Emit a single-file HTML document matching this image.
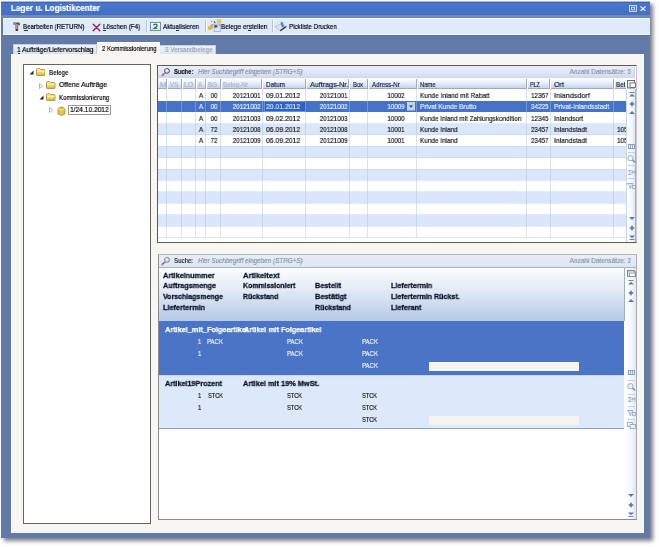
<!DOCTYPE html>
<html><head><meta charset="utf-8"><style>
html,body{margin:0;padding:0;width:659px;height:547px;overflow:hidden;background:#fff;}
body{position:relative;font-family:"Liberation Sans",sans-serif;filter:blur(0.3px);}
.a{position:absolute;}
.t{position:absolute;line-height:1;white-space:pre;-webkit-text-stroke:0.2px currentColor;will-change:transform;}
</style></head><body>
<div class="a" style="left:1.00px;top:1.00px;width:649.00px;height:537.00px;background:#617aa7;box-shadow:3px 3px 4px rgba(40,40,60,0.6);"></div>
<div class="a" style="left:1.00px;top:1.00px;width:649.00px;height:14.40px;background:linear-gradient(#a9b9da 0,#a9b9da 0.6px,#3d63b6 0.6px,#3d63b6 1.4px,#4a76cb 2.2px,#4672c8 8px,#4470c6 13.4px,#3b62b4 14.4px);"></div>
<div class="a" style="left:1.00px;top:15.40px;width:649.00px;height:2.40px;background:#7088ba;"></div>
<div class="t" style="left:10.70px;top:4.05px;font-size:8.8px;font-weight:bold;color:#fff;-webkit-text-stroke:0.2px #fff;transform:scaleX(0.9192);transform-origin:left 0;">Lager u. Logistikcenter</div>
<svg class="a" style="left:628.5px;top:4.8px" width="8" height="7" viewBox="0 0 8 7"><rect x="0.5" y="0.5" width="7" height="6" fill="none" stroke="#d8e2f6" stroke-width="0.9"/><rect x="2.4" y="2.2" width="3.2" height="2.6" fill="none" stroke="#d8e2f6" stroke-width="0.9"/></svg>
<svg class="a" style="left:640.3px;top:5.8px" width="6" height="5.5" viewBox="0 0 6 5.5"><path d="M0.5 0.5L5.5 5M5.5 0.5L0.5 5" stroke="#eef3fc" stroke-width="1.1"/></svg>
<div class="a" style="left:2.60px;top:17.80px;width:647.40px;height:17.20px;background:linear-gradient(#effaff 0,#effaff 0.9px,#dfecfc 1.5px,#dbe9fb 15.2px,#f4f9ff 16.2px,#eef6ff 17.2px);"></div>
<div class="a" style="left:1.00px;top:35.00px;width:649.00px;height:1.00px;background:#5d74a2;"></div>
<div class="t" style="left:23.20px;top:22.90px;font-size:7.8px;color:#000;transform:scaleX(0.7926);transform-origin:left 0;">Bearbeiten (RETURN)</div>
<div class="t" style="left:102.80px;top:22.90px;font-size:7.8px;color:#000;transform:scaleX(0.8095);transform-origin:left 0;">Löschen (F4)</div>
<div class="t" style="left:162.70px;top:22.90px;font-size:7.8px;color:#000;transform:scaleX(0.8062);transform-origin:left 0;">Aktualisieren</div>
<div class="t" style="left:220.70px;top:22.90px;font-size:7.8px;color:#000;transform:scaleX(0.8277);transform-origin:left 0;">Belege erstellen</div>
<div class="t" style="left:288.60px;top:22.90px;font-size:7.8px;color:#000;transform:scaleX(0.7991);transform-origin:left 0;">Pickliste Drucken</div>
<div class="a" style="left:145.60px;top:19.50px;width:1.00px;height:12.50px;background:#b6c4d8;"></div>
<div class="a" style="left:146.60px;top:19.50px;width:1.00px;height:12.50px;background:#ffffff;"></div>
<div class="a" style="left:204.50px;top:19.50px;width:1.00px;height:12.50px;background:#b6c4d8;"></div>
<div class="a" style="left:205.50px;top:19.50px;width:1.00px;height:12.50px;background:#ffffff;"></div>
<div class="a" style="left:272.20px;top:19.50px;width:1.00px;height:12.50px;background:#b6c4d8;"></div>
<div class="a" style="left:273.20px;top:19.50px;width:1.00px;height:12.50px;background:#ffffff;"></div>
<div class="a" style="left:12.60px;top:43.80px;width:84.20px;height:10.60px;background:linear-gradient(#eef3fb,#d6e2f3);border:1px solid #c2cee0;border-bottom:none;box-sizing:border-box;"></div>
<div class="t" style="left:17.40px;top:45.90px;font-size:7.8px;color:#000;transform:scaleX(0.8431);transform-origin:left 0;">1 Aufträge/Liefervorschlag</div>
<div class="a" style="left:97.40px;top:42.20px;width:62.70px;height:12.80px;background:#f7f6f1;border-top:1px solid #ffffff;box-sizing:border-box;"></div>
<div class="t" style="left:101.70px;top:44.90px;font-size:7.8px;color:#000;transform:scaleX(0.7727);transform-origin:left 0;">2 Kommissionierung</div>
<div class="a" style="left:160.10px;top:44.80px;width:56.30px;height:9.40px;background:linear-gradient(#eef3fb,#d9e4f4);border:1px solid #c4d0e2;border-left:none;border-bottom:none;box-sizing:border-box;"></div>
<div class="t" style="left:165.40px;top:45.90px;font-size:7.8px;color:#9aa3b4;transform:scaleX(0.8164);transform-origin:left 0;">3 Versandbelege</div>
<div class="a" style="left:10.70px;top:54.00px;width:633.30px;height:478.60px;background:#f7f6f1;border-left:1px solid #ffffff;border-bottom:1px solid #eef4fc;box-sizing:border-box;"></div>
<div class="a" style="left:23.20px;top:64.00px;width:127.80px;height:459.60px;background:#fff;border:1px solid #656565;box-sizing:border-box;"></div>
<svg class="a" style="left:12.5px;top:21.5px" width="8" height="10" viewBox="0 0 8 10"><path d="M0.4 0.6 L5.6 0.4 Q7 0.6 7 2 L7 3.2 L5.6 3.2 L5 2.4 L0.4 2.4Z" fill="#4e5660"/><path d="M0.4 0.6 L3 0.5 L3 2.4 L0.4 2.4Z" fill="#8a9098"/><path d="M2.2 2.6 L5.2 2.6 L5.2 8.2 Q3.7 10 2.2 8.2Z" fill="#b0704a"/><rect x="2.8" y="3" width="0.8" height="5" fill="#e8b090"/><circle cx="3.7" cy="8" r="0.9" fill="#3a1410"/></svg>
<div class="a" style="left:23.50px;top:30.30px;width:4.00px;height:0.60px;background:#333;"></div>
<div class="a" style="left:103.20px;top:30.30px;width:3.30px;height:0.60px;background:#333;"></div>
<div class="a" style="left:17.60px;top:53.10px;width:2.60px;height:0.60px;background:#333;"></div>
<div class="a" style="left:175.60px;top:30.30px;width:3.00px;height:0.60px;background:#333;"></div>
<div class="a" style="left:248.00px;top:30.30px;width:2.80px;height:0.60px;background:#333;"></div>
<svg class="a" style="left:91.5px;top:22.5px" width="9" height="9" viewBox="0 0 9 9"><path d="M1.2 1.2 L7.8 7.8 M7.8 1.2 L1.2 7.8" stroke="#a8183a" stroke-width="1.35" stroke-linecap="round"/></svg>
<svg class="a" style="left:150px;top:22px" width="11" height="9" viewBox="0 0 11 9"><defs><linearGradient id="rg" x1="0" y1="0" x2="0" y2="1"><stop offset="0" stop-color="#f6fbff"/><stop offset="1" stop-color="#d4e6f8"/></linearGradient></defs><rect x="0.5" y="0.5" width="10" height="8" fill="url(#rg)" stroke="#6c84a6" stroke-width="0.9"/><path d="M3.6 3.1 Q5.2 1.6 6.9 2.6 Q7.6 3.6 6.2 4.7 L4.2 6.3 L7.3 6.3" fill="none" stroke="#1c8c2c" stroke-width="1.3"/><path d="M3.2 2.2 L4.6 2.6 L3.6 3.8Z" fill="#1c8c2c"/></svg>
<svg class="a" style="left:207px;top:19px" width="15" height="14" viewBox="0 0 15 14"><rect x="7.2" y="5.1" width="6.3" height="7.5" fill="#d6e6fb" stroke="#93a6c8" stroke-width="0.7"/><path d="M0.8 9.2 Q1.2 6.8 3.6 6.2 Q5.4 4.2 6.6 5.2 Q6.9 7.6 5.6 9.4 Q3.8 11.6 1.6 10.8Z" fill="#e3b23c"/><path d="M0.8 9.6 Q2 8.2 3.4 9 Q2.6 10.8 1.4 10.6Z" fill="#c8c860"/><path d="M3.8 6.4 Q5.4 4.6 6.4 5.6 Q5.4 7.2 4.4 7.4Z" fill="#f0a030"/><path d="M7.4 6.2 Q9 5.3 11 7.2 Q9.6 9.2 7.6 8.8Z" fill="#2452b8"/><circle cx="12" cy="2.3" r="1.9" fill="#f4d050" stroke="#d89a30" stroke-width="0.6"/><circle cx="4.6" cy="2.6" r="0.7" fill="#5a80d0"/><circle cx="7.6" cy="3.2" r="0.9" fill="#3060c0"/><circle cx="12.2" cy="6.2" r="0.5" fill="#3060c0"/></svg>
<svg class="a" style="left:275px;top:19.5px" width="13" height="12" viewBox="0 0 13 12"><path d="M0.3 6.6 L5 4 L11.8 6.8 L5.5 11.3Z" fill="#e6dfe3" stroke="#9a9aa2" stroke-width="0.5"/><path d="M11.8 6.8 L5.5 11.3 L5.1 10.1 L10.6 6.2Z" fill="#1e2438"/><path d="M2.4 2.2 L5.6 0.6 L8.2 3.2 L5 4.8Z" fill="#effbff" stroke="#a8b8c8" stroke-width="0.4"/><path d="M5.1 2.6 L7.4 2 L9.3 6.4 L7 7.6Z" fill="#3d8bdb"/></svg>
<svg class="a" style="left:28.5px;top:70.3px" width="5" height="5" viewBox="0 0 5 5"><path d="M4.5 0.5 L4.5 4.5 L0.5 4.5Z" fill="#262626"/></svg>
<svg class="a" style="left:35.5px;top:68px" width="9.5" height="8" viewBox="0 0 9.5 8"><defs><linearGradient id="fg" x1="0" y1="0" x2="0" y2="1"><stop offset="0" stop-color="#fbeaa0"/><stop offset="0.6" stop-color="#efd46a"/><stop offset="1" stop-color="#d8b040"/></linearGradient></defs><path d="M0.5 1.6 Q0.5 0.5 1.5 0.5 L3.6 0.5 L4.5 1.5 L8 1.5 Q9 1.5 9 2.5 L9 6.8 Q9 7.5 8.3 7.5 L1.2 7.5 Q0.5 7.5 0.5 6.8Z" fill="url(#fg)" stroke="#a88a30" stroke-width="0.8"/><rect x="1.2" y="3" width="7.1" height="1" fill="#fff6c0" opacity="0.8"/></svg>
<div class="t" style="left:48.80px;top:68.90px;font-size:7.8px;color:#000;transform:scaleX(0.8029);transform-origin:left 0;">Belege</div>
<svg class="a" style="left:39px;top:82.7px" width="4" height="6" viewBox="0 0 4 6"><path d="M0.5 0.5 L3.5 3 L0.5 5.5Z" fill="none" stroke="#a0a0a0" stroke-width="0.8"/></svg>
<svg class="a" style="left:46px;top:80.5px" width="9.5" height="8" viewBox="0 0 9.5 8"><defs><linearGradient id="fg" x1="0" y1="0" x2="0" y2="1"><stop offset="0" stop-color="#fbeaa0"/><stop offset="0.6" stop-color="#efd46a"/><stop offset="1" stop-color="#d8b040"/></linearGradient></defs><path d="M0.5 1.6 Q0.5 0.5 1.5 0.5 L3.6 0.5 L4.5 1.5 L8 1.5 Q9 1.5 9 2.5 L9 6.8 Q9 7.5 8.3 7.5 L1.2 7.5 Q0.5 7.5 0.5 6.8Z" fill="url(#fg)" stroke="#a88a30" stroke-width="0.8"/><rect x="1.2" y="3" width="7.1" height="1" fill="#fff6c0" opacity="0.8"/></svg>
<div class="t" style="left:59.20px;top:80.90px;font-size:7.8px;color:#000;transform:scaleX(0.8826);transform-origin:left 0;">Offene Aufträge</div>
<svg class="a" style="left:38.5px;top:95.3px" width="5" height="5" viewBox="0 0 5 5"><path d="M4.5 0.5 L4.5 4.5 L0.5 4.5Z" fill="#262626"/></svg>
<svg class="a" style="left:46px;top:92.7px" width="9.5" height="8" viewBox="0 0 9.5 8"><defs><linearGradient id="fg" x1="0" y1="0" x2="0" y2="1"><stop offset="0" stop-color="#fbeaa0"/><stop offset="0.6" stop-color="#efd46a"/><stop offset="1" stop-color="#d8b040"/></linearGradient></defs><path d="M0.5 1.6 Q0.5 0.5 1.5 0.5 L3.6 0.5 L4.5 1.5 L8 1.5 Q9 1.5 9 2.5 L9 6.8 Q9 7.5 8.3 7.5 L1.2 7.5 Q0.5 7.5 0.5 6.8Z" fill="url(#fg)" stroke="#a88a30" stroke-width="0.8"/><rect x="1.2" y="3" width="7.1" height="1" fill="#fff6c0" opacity="0.8"/></svg>
<div class="t" style="left:59.20px;top:93.90px;font-size:7.8px;color:#000;transform:scaleX(0.7840);transform-origin:left 0;">Kommissionierung</div>
<svg class="a" style="left:49.3px;top:107.3px" width="4" height="6" viewBox="0 0 4 6"><path d="M0.5 0.5 L3.5 3 L0.5 5.5Z" fill="none" stroke="#a0a0a0" stroke-width="0.8"/></svg>
<svg class="a" style="left:57px;top:105.5px" width="9" height="10" viewBox="0 0 9 10"><path d="M1 2.5 L4.5 0.8 L8 2.5 L8 8 L4.5 9.4 L1 8Z" fill="#e2c44a" stroke="#9a8230" stroke-width="0.7"/><path d="M1 2.5 L4.5 4 L8 2.5" fill="none" stroke="#fff0a0" stroke-width="0.7"/></svg>
<div class="a" style="left:67.80px;top:105.30px;width:42.80px;height:9.90px;border:1px solid #9a9a9a;box-sizing:border-box;"></div>
<div class="t" style="left:70.00px;top:105.90px;font-size:7.8px;color:#000;transform:scaleX(0.8519);transform-origin:left 0;">1/24.10.2012</div>
<div class="a" style="left:157.30px;top:64.80px;width:479.70px;height:178.00px;background:#fff;border:1px solid #5a5a5a;border-right-color:#c4c9d4;box-sizing:border-box;"></div>
<div class="a" style="left:158.30px;top:65.80px;width:476.50px;height:12.00px;background:linear-gradient(#e9edfa,#dfe5f7 60%,#cdd7ee);border-right:1px solid #c8d2e6;box-sizing:border-box;"></div>
<div class="a" style="left:158.30px;top:77.80px;width:477.70px;height:0.80px;background:#f6f9fe;"></div>
<svg class="a" style="left:159.5px;top:67.3px" width="11" height="10" viewBox="0 0 11 10"><path d="M4.4 6.4 L2.2 8.6" stroke="#c09098" stroke-width="2" stroke-linecap="round"/><path d="M4.2 6.6 L2.8 8" stroke="#7a4048" stroke-width="0.9" stroke-linecap="round"/><circle cx="7" cy="3.9" r="2.4" fill="#c8f2fa" stroke="#383838" stroke-width="0.9"/><path d="M5.7 2.7 Q6.6 2.1 7.5 2.3" stroke="#fff" stroke-width="0.7" fill="none"/></svg>
<div class="t" style="left:173.90px;top:67.90px;font-size:7.8px;color:#101010;font-weight:bold;transform:scaleX(0.7421);transform-origin:left 0;">Suche:</div>
<div class="t" style="left:198.20px;top:67.90px;font-size:7.8px;color:#838da2;font-style:italic;transform:scaleX(0.8125);transform-origin:left 0;">Hier Suchbegriff eingeben (STRG+S)</div>
<div class="t" style="right:27.50px;top:67.90px;font-size:7.8px;color:#8a93a4;transform:scaleX(0.8294);transform-origin:right 0;">Anzahl Datensätze: 5</div>
<div class="a" style="left:158.30px;top:78.50px;width:467.70px;height:10.80px;background:linear-gradient(#ffffff,#e4ecf8 45%,#c3d3ec 92%,#9aaac6 94%,#9aaac6);"></div>
<div class="a" style="left:166.10px;top:79.00px;width:1.00px;height:9.80px;background:#9eabbf;"></div>
<div class="a" style="left:167.10px;top:79.00px;width:0.80px;height:9.80px;background:#ffffff;"></div>
<div class="a" style="left:180.50px;top:79.00px;width:1.00px;height:9.80px;background:#9eabbf;"></div>
<div class="a" style="left:181.50px;top:79.00px;width:0.80px;height:9.80px;background:#ffffff;"></div>
<div class="a" style="left:195.00px;top:79.00px;width:1.00px;height:9.80px;background:#9eabbf;"></div>
<div class="a" style="left:196.00px;top:79.00px;width:0.80px;height:9.80px;background:#ffffff;"></div>
<div class="a" style="left:204.90px;top:79.00px;width:1.00px;height:9.80px;background:#9eabbf;"></div>
<div class="a" style="left:205.90px;top:79.00px;width:0.80px;height:9.80px;background:#ffffff;"></div>
<div class="a" style="left:219.60px;top:79.00px;width:1.00px;height:9.80px;background:#9eabbf;"></div>
<div class="a" style="left:220.60px;top:79.00px;width:0.80px;height:9.80px;background:#ffffff;"></div>
<div class="a" style="left:261.20px;top:79.00px;width:1.00px;height:9.80px;background:#9eabbf;"></div>
<div class="a" style="left:262.20px;top:79.00px;width:0.80px;height:9.80px;background:#ffffff;"></div>
<div class="a" style="left:304.80px;top:79.00px;width:1.00px;height:9.80px;background:#9eabbf;"></div>
<div class="a" style="left:305.80px;top:79.00px;width:0.80px;height:9.80px;background:#ffffff;"></div>
<div class="a" style="left:348.40px;top:79.00px;width:1.00px;height:9.80px;background:#9eabbf;"></div>
<div class="a" style="left:349.40px;top:79.00px;width:0.80px;height:9.80px;background:#ffffff;"></div>
<div class="a" style="left:367.00px;top:79.00px;width:1.00px;height:9.80px;background:#9eabbf;"></div>
<div class="a" style="left:368.00px;top:79.00px;width:0.80px;height:9.80px;background:#ffffff;"></div>
<div class="a" style="left:415.70px;top:79.00px;width:1.00px;height:9.80px;background:#9eabbf;"></div>
<div class="a" style="left:416.70px;top:79.00px;width:0.80px;height:9.80px;background:#ffffff;"></div>
<div class="a" style="left:525.70px;top:79.00px;width:1.00px;height:9.80px;background:#9eabbf;"></div>
<div class="a" style="left:526.70px;top:79.00px;width:0.80px;height:9.80px;background:#ffffff;"></div>
<div class="a" style="left:549.20px;top:79.00px;width:1.00px;height:9.80px;background:#9eabbf;"></div>
<div class="a" style="left:550.20px;top:79.00px;width:0.80px;height:9.80px;background:#ffffff;"></div>
<div class="a" style="left:612.50px;top:79.00px;width:1.00px;height:9.80px;background:#9eabbf;"></div>
<div class="a" style="left:613.50px;top:79.00px;width:0.80px;height:9.80px;background:#ffffff;"></div>
<div class="t" style="left:159.80px;top:80.90px;font-size:7.8px;color:#a9b3c4;transform:scaleX(0.9849);transform-origin:left 0;">M</div>
<div class="t" style="left:169.80px;top:80.90px;font-size:7.8px;color:#a9b3c4;transform:scaleX(0.7880);transform-origin:left 0;">VS</div>
<div class="t" style="left:183.80px;top:80.90px;font-size:7.8px;color:#a9b3c4;transform:scaleX(0.8841);transform-origin:left 0;">LO</div>
<div class="t" style="left:197.50px;top:80.90px;font-size:7.8px;color:#a9b3c4;transform:scaleX(0.8180);transform-origin:left 0;">A</div>
<div class="t" style="left:207.80px;top:80.90px;font-size:7.8px;color:#a9b3c4;transform:scaleX(0.7986);transform-origin:left 0;">BG</div>
<div class="t" style="left:222.60px;top:80.90px;font-size:7.8px;color:#a9b3c4;transform:scaleX(0.8123);transform-origin:left 0;">Beleg-Nr</div>
<div class="t" style="left:265.80px;top:80.90px;font-size:7.8px;color:#16213d;transform:scaleX(0.8270);transform-origin:left 0;">Datum</div>
<div class="t" style="left:309.50px;top:80.90px;font-size:7.8px;color:#16213d;transform:scaleX(0.9180);transform-origin:left 0;">Auftrags-Nr.</div>
<div class="t" style="left:352.80px;top:80.90px;font-size:7.8px;color:#16213d;transform:scaleX(0.7440);transform-origin:left 0;">Box</div>
<div class="t" style="left:372.00px;top:80.90px;font-size:7.8px;color:#16213d;transform:scaleX(0.7919);transform-origin:left 0;">Adress-Nr</div>
<div class="t" style="left:420.00px;top:80.90px;font-size:7.8px;color:#16213d;transform:scaleX(0.7450);transform-origin:left 0;">Name</div>
<div class="t" style="left:530.00px;top:80.90px;font-size:7.8px;color:#16213d;transform:scaleX(0.6781);transform-origin:left 0;">PLZ</div>
<div class="t" style="left:553.70px;top:80.90px;font-size:7.8px;color:#16213d;transform:scaleX(0.9232);transform-origin:left 0;">Ort</div>
<div class="t" style="left:616.20px;top:80.90px;font-size:7.8px;color:#16213d;transform:scaleX(0.8072);transform-origin:left 0;">Bel</div>
<svg class="a" style="left:627.3px;top:79.8px" width="9" height="9" viewBox="0 0 9 9"><rect x="0.5" y="0.5" width="7" height="7.5" fill="#eeeeee" stroke="#6e6e6e" stroke-width="1"/><rect x="3" y="3" width="5.5" height="4.5" fill="#fff" stroke="#6e6e6e" stroke-width="0.9"/></svg>
<div class="a" style="left:158.30px;top:100.70px;width:467.70px;height:11.40px;background:#4672c6;"></div>
<div class="a" style="left:158.30px;top:123.50px;width:467.70px;height:11.40px;background:#dae7fb;"></div>
<div class="a" style="left:158.30px;top:146.30px;width:467.70px;height:11.40px;background:#dae7fb;"></div>
<div class="a" style="left:158.30px;top:169.10px;width:467.70px;height:11.40px;background:#dae7fb;"></div>
<div class="a" style="left:158.30px;top:191.90px;width:467.70px;height:11.40px;background:#dae7fb;"></div>
<div class="a" style="left:158.30px;top:214.70px;width:467.70px;height:11.40px;background:#dae7fb;"></div>
<div class="a" style="left:158.30px;top:122.90px;width:467.70px;height:0.80px;background:rgba(190,208,240,0.45);"></div>
<div class="a" style="left:158.30px;top:134.30px;width:467.70px;height:0.80px;background:rgba(190,208,240,0.45);"></div>
<div class="a" style="left:158.30px;top:145.70px;width:467.70px;height:0.80px;background:rgba(190,208,240,0.45);"></div>
<div class="a" style="left:158.30px;top:157.10px;width:467.70px;height:0.80px;background:rgba(190,208,240,0.45);"></div>
<div class="a" style="left:158.30px;top:168.50px;width:467.70px;height:0.80px;background:rgba(190,208,240,0.45);"></div>
<div class="a" style="left:158.30px;top:179.90px;width:467.70px;height:0.80px;background:rgba(190,208,240,0.45);"></div>
<div class="a" style="left:158.30px;top:191.30px;width:467.70px;height:0.80px;background:rgba(190,208,240,0.45);"></div>
<div class="a" style="left:158.30px;top:202.70px;width:467.70px;height:0.80px;background:rgba(190,208,240,0.45);"></div>
<div class="a" style="left:158.30px;top:214.10px;width:467.70px;height:0.80px;background:rgba(190,208,240,0.45);"></div>
<div class="a" style="left:158.30px;top:225.50px;width:467.70px;height:0.80px;background:rgba(190,208,240,0.45);"></div>
<div class="a" style="left:166.40px;top:89.30px;width:1.00px;height:148.20px;background:rgba(170,190,225,0.45);"></div>
<div class="a" style="left:180.80px;top:89.30px;width:1.00px;height:148.20px;background:rgba(170,190,225,0.45);"></div>
<div class="a" style="left:195.30px;top:89.30px;width:1.00px;height:148.20px;background:rgba(170,190,225,0.45);"></div>
<div class="a" style="left:205.20px;top:89.30px;width:1.00px;height:148.20px;background:rgba(170,190,225,0.45);"></div>
<div class="a" style="left:219.90px;top:89.30px;width:1.00px;height:148.20px;background:rgba(170,190,225,0.45);"></div>
<div class="a" style="left:261.50px;top:89.30px;width:1.00px;height:148.20px;background:rgba(170,190,225,0.45);"></div>
<div class="a" style="left:305.10px;top:89.30px;width:1.00px;height:148.20px;background:rgba(170,190,225,0.45);"></div>
<div class="a" style="left:348.70px;top:89.30px;width:1.00px;height:148.20px;background:rgba(170,190,225,0.45);"></div>
<div class="a" style="left:367.30px;top:89.30px;width:1.00px;height:148.20px;background:rgba(170,190,225,0.45);"></div>
<div class="a" style="left:416.00px;top:89.30px;width:1.00px;height:148.20px;background:rgba(170,190,225,0.45);"></div>
<div class="a" style="left:526.00px;top:89.30px;width:1.00px;height:148.20px;background:rgba(170,190,225,0.45);"></div>
<div class="a" style="left:549.50px;top:89.30px;width:1.00px;height:148.20px;background:rgba(170,190,225,0.45);"></div>
<div class="a" style="left:612.80px;top:89.30px;width:1.00px;height:148.20px;background:rgba(170,190,225,0.45);"></div>
<div class="a" style="left:158.30px;top:236.90px;width:467.70px;height:1.00px;background:#dbe3f0;"></div>
<div class="a" style="left:263.50px;top:100.70px;width:42.50px;height:11.40px;background:#2f62c2;border:1px solid #6a92dc;box-sizing:border-box;"></div>
<svg class="a" style="left:406.8px;top:102px" width="8" height="8.5" viewBox="0 0 8 8.5"><rect x="0" y="0" width="8" height="8.5" fill="#c3d5f1"/><path d="M2 3.5 L6 3.5 L4 5.8Z" fill="#2a3a60"/></svg>
<div class="t" style="left:100.90px;width:200px;text-align:center;top:91.90px;font-size:7.8px;color:#1b1b1b;transform:scaleX(0.8180);transform-origin:center 0;">A</div>
<div class="t" style="left:113.80px;width:200px;text-align:center;top:91.90px;font-size:7.8px;color:#1b1b1b;transform:scaleX(0.8180);transform-origin:center 0;">00</div>
<div class="t" style="right:398.20px;top:91.90px;font-size:7.8px;color:#1b1b1b;transform:scaleX(0.8068);transform-origin:right 0;">20121001</div>
<div class="t" style="left:265.80px;top:91.90px;font-size:7.8px;color:#1b1b1b;transform:scaleX(0.8760);transform-origin:left 0;">09.01.2012</div>
<div class="t" style="right:311.50px;top:91.90px;font-size:7.8px;color:#1b1b1b;transform:scaleX(0.8068);transform-origin:right 0;">20121001</div>
<div class="t" style="right:254.70px;top:91.90px;font-size:7.8px;color:#1b1b1b;transform:scaleX(0.7976);transform-origin:right 0;">10002</div>
<div class="t" style="left:419.60px;top:91.90px;font-size:7.8px;color:#1b1b1b;transform:scaleX(0.8329);transform-origin:left 0;">Kunde Inland mit Rabatt</div>
<div class="t" style="left:530.80px;top:91.90px;font-size:7.8px;color:#1b1b1b;transform:scaleX(0.8114);transform-origin:left 0;">12367</div>
<div class="t" style="left:554.20px;top:91.90px;font-size:7.8px;color:#1b1b1b;transform:scaleX(0.9302);transform-origin:left 0;">Inlandsdorf</div>
<div class="t" style="left:100.90px;width:200px;text-align:center;top:102.90px;font-size:7.8px;color:#e4edff;transform:scaleX(0.8180);transform-origin:center 0;">A</div>
<div class="t" style="left:113.80px;width:200px;text-align:center;top:102.90px;font-size:7.8px;color:#e4edff;transform:scaleX(0.8180);transform-origin:center 0;">00</div>
<div class="t" style="right:398.20px;top:102.90px;font-size:7.8px;color:#e4edff;transform:scaleX(0.8068);transform-origin:right 0;">20121002</div>
<div class="t" style="left:265.80px;top:102.90px;font-size:7.8px;color:#c9e6ff;transform:scaleX(0.8760);transform-origin:left 0;">20.01.2012</div>
<div class="t" style="right:311.50px;top:102.90px;font-size:7.8px;color:#e4edff;transform:scaleX(0.8068);transform-origin:right 0;">20121002</div>
<div class="t" style="right:254.70px;top:102.90px;font-size:7.8px;color:#e4edff;transform:scaleX(0.7976);transform-origin:right 0;">10009</div>
<div class="t" style="left:419.60px;top:102.90px;font-size:7.8px;color:#e4edff;transform:scaleX(0.8339);transform-origin:left 0;">Privat Kunde Brutto</div>
<div class="t" style="left:530.80px;top:102.90px;font-size:7.8px;color:#e4edff;transform:scaleX(0.8114);transform-origin:left 0;">34225</div>
<div class="t" style="left:554.20px;top:102.90px;font-size:7.8px;color:#e4edff;transform:scaleX(0.8530);transform-origin:left 0;">Privat-Inlandsstadt</div>
<div class="t" style="left:100.90px;width:200px;text-align:center;top:114.90px;font-size:7.8px;color:#1b1b1b;transform:scaleX(0.8180);transform-origin:center 0;">A</div>
<div class="t" style="left:113.80px;width:200px;text-align:center;top:114.90px;font-size:7.8px;color:#1b1b1b;transform:scaleX(0.8180);transform-origin:center 0;">00</div>
<div class="t" style="right:398.20px;top:114.90px;font-size:7.8px;color:#1b1b1b;transform:scaleX(0.8068);transform-origin:right 0;">20121003</div>
<div class="t" style="left:265.80px;top:114.90px;font-size:7.8px;color:#1b1b1b;transform:scaleX(0.8760);transform-origin:left 0;">09.02.2012</div>
<div class="t" style="right:311.50px;top:114.90px;font-size:7.8px;color:#1b1b1b;transform:scaleX(0.8068);transform-origin:right 0;">20121003</div>
<div class="t" style="right:254.70px;top:114.90px;font-size:7.8px;color:#1b1b1b;transform:scaleX(0.7976);transform-origin:right 0;">10000</div>
<div class="t" style="left:419.60px;top:114.90px;font-size:7.8px;color:#1b1b1b;transform:scaleX(0.8176);transform-origin:left 0;">Kunde Inland mit Zahlungskondition</div>
<div class="t" style="left:530.80px;top:114.90px;font-size:7.8px;color:#1b1b1b;transform:scaleX(0.8114);transform-origin:left 0;">12345</div>
<div class="t" style="left:554.20px;top:114.90px;font-size:7.8px;color:#1b1b1b;transform:scaleX(0.8524);transform-origin:left 0;">Inlandsort</div>
<div class="t" style="left:100.90px;width:200px;text-align:center;top:125.90px;font-size:7.8px;color:#1b1b1b;transform:scaleX(0.8180);transform-origin:center 0;">A</div>
<div class="t" style="left:113.80px;width:200px;text-align:center;top:125.90px;font-size:7.8px;color:#1b1b1b;transform:scaleX(0.8180);transform-origin:center 0;">72</div>
<div class="t" style="right:398.20px;top:125.90px;font-size:7.8px;color:#1b1b1b;transform:scaleX(0.8068);transform-origin:right 0;">20121008</div>
<div class="t" style="left:265.80px;top:125.90px;font-size:7.8px;color:#1b1b1b;transform:scaleX(0.8760);transform-origin:left 0;">06.09.2012</div>
<div class="t" style="right:311.50px;top:125.90px;font-size:7.8px;color:#1b1b1b;transform:scaleX(0.8068);transform-origin:right 0;">20121008</div>
<div class="t" style="right:254.70px;top:125.90px;font-size:7.8px;color:#1b1b1b;transform:scaleX(0.7976);transform-origin:right 0;">10001</div>
<div class="t" style="left:419.60px;top:125.90px;font-size:7.8px;color:#1b1b1b;transform:scaleX(0.8200);transform-origin:left 0;">Kunde Inland</div>
<div class="t" style="left:530.80px;top:125.90px;font-size:7.8px;color:#1b1b1b;transform:scaleX(0.8114);transform-origin:left 0;">23457</div>
<div class="t" style="left:554.20px;top:125.90px;font-size:7.8px;color:#1b1b1b;transform:scaleX(0.8621);transform-origin:left 0;">Inlandstadt</div>
<div class="a" style="left:613.5px;top:124px;width:12.5px;height:10px;overflow:hidden"><div class="t" style="left:3.9px;top:1.90px;font-size:7.8px;color:#1b1b1b;transform:scaleX(0.82);transform-origin:left 0;">105</div></div>
<div class="t" style="left:100.90px;width:200px;text-align:center;top:136.90px;font-size:7.8px;color:#1b1b1b;transform:scaleX(0.8180);transform-origin:center 0;">A</div>
<div class="t" style="left:113.80px;width:200px;text-align:center;top:136.90px;font-size:7.8px;color:#1b1b1b;transform:scaleX(0.8180);transform-origin:center 0;">72</div>
<div class="t" style="right:398.20px;top:136.90px;font-size:7.8px;color:#1b1b1b;transform:scaleX(0.8068);transform-origin:right 0;">20121009</div>
<div class="t" style="left:265.80px;top:136.90px;font-size:7.8px;color:#1b1b1b;transform:scaleX(0.8760);transform-origin:left 0;">06.09.2012</div>
<div class="t" style="right:311.50px;top:136.90px;font-size:7.8px;color:#1b1b1b;transform:scaleX(0.8068);transform-origin:right 0;">20121009</div>
<div class="t" style="right:254.70px;top:136.90px;font-size:7.8px;color:#1b1b1b;transform:scaleX(0.7976);transform-origin:right 0;">10001</div>
<div class="t" style="left:419.60px;top:136.90px;font-size:7.8px;color:#1b1b1b;transform:scaleX(0.8200);transform-origin:left 0;">Kunde Inland</div>
<div class="t" style="left:530.80px;top:136.90px;font-size:7.8px;color:#1b1b1b;transform:scaleX(0.8114);transform-origin:left 0;">23457</div>
<div class="t" style="left:554.20px;top:136.90px;font-size:7.8px;color:#1b1b1b;transform:scaleX(0.8621);transform-origin:left 0;">Inlandstadt</div>
<div class="a" style="left:613.5px;top:135px;width:12.5px;height:10px;overflow:hidden"><div class="t" style="left:3.9px;top:1.90px;font-size:7.8px;color:#1b1b1b;transform:scaleX(0.82);transform-origin:left 0;">105</div></div>
<div class="a" style="left:626.00px;top:89.30px;width:10.00px;height:152.50px;background:linear-gradient(90deg,#ffffff,#f3f6fb 60%,#dfe7f4);border-left:1px solid #c9d5ea;border-right:1px solid #9fb0cf;box-sizing:border-box;"></div>
<svg class="a" style="left:628.8px;top:91.8px" width="6" height="5" viewBox="0 0 6 5"><rect x="0.5" y="0" width="5" height="0.9" fill="#6178a6"/><path d="M0 4.6 L3 1.7 L6 4.6Z" fill="#6178a6"/></svg>
<svg class="a" style="left:628.5px;top:100.8px" width="6" height="6" viewBox="0 0 6 6"><path d="M3 0 L4.1 1.9 L6 3 L4.1 4.1 L3 6 L1.9 4.1 L0 3 L1.9 1.9Z" fill="#6178a6"/></svg>
<svg class="a" style="left:628.8px;top:110.8px" width="6" height="3" viewBox="0 0 6 3"><path d="M0 3 L3 0 L6 3Z" fill="#6178a6"/></svg>
<svg class="a" style="left:628.3px;top:143.5px" width="7" height="5" viewBox="0 0 7 5"><rect x="0.4" y="0.4" width="6" height="4.2" fill="none" stroke="#7a90b8" stroke-width="0.8"/><path d="M2.4 0.4 V4.6 M4.4 0.4 V4.6" stroke="#7a90b8" stroke-width="0.8"/></svg>
<div class="a" style="left:628.00px;top:152.30px;width:7.00px;height:0.60px;background:#c4d0e4;"></div>
<svg class="a" style="left:627.3px;top:155px" width="9" height="8" viewBox="0 0 9 8"><circle cx="3.5" cy="3.2" r="2.6" fill="none" stroke="#8aa0c4" stroke-width="0.9"/><path d="M5.5 5 L8.2 7.5" stroke="#7088b4" stroke-width="1.3"/></svg>
<div class="a" style="left:628.00px;top:165.40px;width:7.00px;height:0.60px;background:#c4d0e4;"></div>
<svg class="a" style="left:627.8px;top:170.3px" width="8" height="5" viewBox="0 0 8 5"><path d="M3 0.5 H0.5 L2 2.5 L0.5 4.5 H3" fill="none" stroke="#8aa0c4" stroke-width="0.8"/><path d="M4 4.5 V0.5 L5.5 3 L7 0.5 V4.5" fill="none" stroke="#8aa0c4" stroke-width="0.8"/></svg>
<div class="a" style="left:628.00px;top:178.00px;width:7.00px;height:0.60px;background:#c4d0e4;"></div>
<svg class="a" style="left:627.3px;top:182.5px" width="9" height="6" viewBox="0 0 9 6"><path d="M0.5 0.5 H6 L3.8 3 V5.5 L2.8 5 V3Z" fill="none" stroke="#8aa0c4" stroke-width="0.8"/><rect x="5.5" y="2.5" width="3" height="3" fill="none" stroke="#8aa0c4" stroke-width="0.7"/></svg>
<svg class="a" style="left:628.8px;top:217.4px" width="6" height="3" viewBox="0 0 6 3"><path d="M0 0 L3 3 L6 0Z" fill="#6178a6"/></svg>
<svg class="a" style="left:628.5px;top:225px" width="6" height="6" viewBox="0 0 6 6"><path d="M3 0 L4.1 1.9 L6 3 L4.1 4.1 L3 6 L1.9 4.1 L0 3 L1.9 1.9Z" fill="#6178a6"/></svg>
<svg class="a" style="left:628.8px;top:234.9px" width="6" height="5" viewBox="0 0 6 5"><rect x="0.5" y="4.1" width="5" height="0.9" fill="#6178a6"/><path d="M0 0.4 L3 3.3 L6 0.4Z" fill="#6178a6"/></svg>
<div class="a" style="left:157.50px;top:253.50px;width:479.70px;height:266.30px;background:#fff;border:1px solid #8a8c90;border-top-color:#b4b8c0;border-right-color:#a8acb4;box-sizing:border-box;"></div>
<div class="a" style="left:158.50px;top:254.50px;width:477.70px;height:12.10px;background:linear-gradient(#e8edf8,#dde5f3);"></div>
<div class="a" style="left:158.50px;top:266.60px;width:477.70px;height:0.90px;background:#aab4c4;"></div>
<svg class="a" style="left:160.2px;top:256.2px" width="11" height="10" viewBox="0 0 11 10"><path d="M4.4 6.4 L2.2 8.6" stroke="#c09098" stroke-width="2" stroke-linecap="round"/><path d="M4.2 6.6 L2.8 8" stroke="#7a4048" stroke-width="0.9" stroke-linecap="round"/><circle cx="7" cy="3.9" r="2.4" fill="#c8f2fa" stroke="#6a6e78" stroke-width="0.9"/><path d="M5.7 2.7 Q6.6 2.1 7.5 2.3" stroke="#fff" stroke-width="0.7" fill="none"/></svg>
<div class="t" style="left:173.90px;top:256.90px;font-size:7.8px;color:#262626;transform:scaleX(0.7948);transform-origin:left 0;">Suche:</div>
<div class="t" style="left:198.20px;top:256.90px;font-size:7.8px;color:#8790a6;font-style:italic;transform:scaleX(0.8125);transform-origin:left 0;">Hier Suchbegriff eingeben (STRG+S)</div>
<div class="t" style="right:27.50px;top:256.90px;font-size:7.8px;color:#8a93a4;transform:scaleX(0.8294);transform-origin:right 0;">Anzahl Datensätze: 2</div>
<div class="a" style="left:159.00px;top:267.50px;width:465.80px;height:53.40px;background:linear-gradient(#fbfcfe,#e4ebf6 40%,#b5c8e6);border-right:1px solid #9fb0cc;box-sizing:border-box;"></div>
<div class="t" style="left:163.20px;top:271.90px;font-size:7.8px;color:#0a1228;font-weight:bold;-webkit-text-stroke:0.3px currentColor;transform:scaleX(0.9373);transform-origin:left 0;">Artikelnummer</div>
<div class="t" style="left:163.20px;top:281.90px;font-size:7.8px;color:#0a1228;font-weight:bold;-webkit-text-stroke:0.3px currentColor;transform:scaleX(0.9282);transform-origin:left 0;">Auftragsmenge</div>
<div class="t" style="left:163.20px;top:292.90px;font-size:7.8px;color:#0a1228;font-weight:bold;-webkit-text-stroke:0.3px currentColor;transform:scaleX(0.8992);transform-origin:left 0;">Vorschlagsmenge</div>
<div class="t" style="left:163.20px;top:303.90px;font-size:7.8px;color:#0a1228;font-weight:bold;-webkit-text-stroke:0.3px currentColor;transform:scaleX(0.9339);transform-origin:left 0;">Liefertermin</div>
<div class="t" style="left:242.90px;top:271.90px;font-size:7.8px;color:#0a1228;font-weight:bold;-webkit-text-stroke:0.3px currentColor;transform:scaleX(0.9621);transform-origin:left 0;">Artikeltext</div>
<div class="t" style="left:242.90px;top:281.90px;font-size:7.8px;color:#0a1228;font-weight:bold;-webkit-text-stroke:0.3px currentColor;transform:scaleX(0.8889);transform-origin:left 0;">Kommissioniert</div>
<div class="t" style="left:242.90px;top:292.90px;font-size:7.8px;color:#0a1228;font-weight:bold;-webkit-text-stroke:0.3px currentColor;transform:scaleX(0.8877);transform-origin:left 0;">Rückstand</div>
<div class="t" style="left:314.90px;top:281.90px;font-size:7.8px;color:#0a1228;font-weight:bold;-webkit-text-stroke:0.3px currentColor;transform:scaleX(0.9299);transform-origin:left 0;">Bestellt</div>
<div class="t" style="left:314.90px;top:292.90px;font-size:7.8px;color:#0a1228;font-weight:bold;-webkit-text-stroke:0.3px currentColor;transform:scaleX(0.9439);transform-origin:left 0;">Bestätigt</div>
<div class="t" style="left:314.90px;top:303.90px;font-size:7.8px;color:#0a1228;font-weight:bold;-webkit-text-stroke:0.3px currentColor;transform:scaleX(0.9003);transform-origin:left 0;">Rückstand</div>
<div class="t" style="left:391.30px;top:281.90px;font-size:7.8px;color:#0a1228;font-weight:bold;-webkit-text-stroke:0.3px currentColor;transform:scaleX(0.9162);transform-origin:left 0;">Liefertermin</div>
<div class="t" style="left:391.30px;top:292.90px;font-size:7.8px;color:#0a1228;font-weight:bold;-webkit-text-stroke:0.3px currentColor;transform:scaleX(0.9109);transform-origin:left 0;">Liefertermin Rückst.</div>
<div class="t" style="left:391.30px;top:303.90px;font-size:7.8px;color:#0a1228;font-weight:bold;-webkit-text-stroke:0.3px currentColor;transform:scaleX(0.9228);transform-origin:left 0;">Lieferant</div>
<div class="a" style="left:159.00px;top:320.90px;width:465.00px;height:53.70px;background:#4a74c6;"></div>
<div class="a" style="left:159.00px;top:374.60px;width:465.00px;height:0.90px;background:#c9d6ee;"></div>
<div class="t" style="left:164.60px;top:325.90px;font-size:7.8px;color:#fff;font-weight:bold;-webkit-text-stroke:0.25px currentColor;transform:scaleX(0.9386);transform-origin:left 0;">Artikel_mit_Folgeartikel</div>
<div class="t" style="left:243.80px;top:325.90px;font-size:7.8px;color:#fff;font-weight:bold;-webkit-text-stroke:0.25px currentColor;transform:scaleX(0.9204);transform-origin:left 0;">Artikel mit Folgeartikel</div>
<div class="t" style="right:457.40px;top:337.90px;font-size:7.8px;color:#f4f7ff;transform:scaleX(0.8180);transform-origin:right 0;">1</div>
<div class="t" style="left:207.40px;top:337.90px;font-size:7.8px;color:#f4f7ff;transform:scaleX(0.7695);transform-origin:left 0;">PACK</div>
<div class="t" style="right:457.40px;top:349.90px;font-size:7.8px;color:#f4f7ff;transform:scaleX(0.8180);transform-origin:right 0;">1</div>
<div class="t" style="left:286.60px;top:337.90px;font-size:7.8px;color:#f4f7ff;transform:scaleX(0.7695);transform-origin:left 0;">PACK</div>
<div class="t" style="left:286.60px;top:349.90px;font-size:7.8px;color:#f4f7ff;transform:scaleX(0.7695);transform-origin:left 0;">PACK</div>
<div class="t" style="left:361.50px;top:337.90px;font-size:7.8px;color:#f4f7ff;transform:scaleX(0.7695);transform-origin:left 0;">PACK</div>
<div class="t" style="left:361.50px;top:349.90px;font-size:7.8px;color:#f4f7ff;transform:scaleX(0.7695);transform-origin:left 0;">PACK</div>
<div class="t" style="left:361.50px;top:361.90px;font-size:7.8px;color:#f4f7ff;transform:scaleX(0.7695);transform-origin:left 0;">PACK</div>
<div class="a" style="left:429.10px;top:361.80px;width:150.10px;height:9.20px;background:#f6f5f0;"></div>
<div class="a" style="left:159.00px;top:375.50px;width:465.00px;height:52.80px;background:#dde9fb;"></div>
<div class="a" style="left:159.00px;top:428.30px;width:465.00px;height:1.00px;background:#8fa3c6;"></div>
<div class="t" style="left:164.60px;top:379.90px;font-size:7.8px;color:#0a1228;font-weight:bold;-webkit-text-stroke:0.3px currentColor;transform:scaleX(0.9244);transform-origin:left 0;">Artikel19Prozent</div>
<div class="t" style="left:243.30px;top:379.90px;font-size:7.8px;color:#0a1228;font-weight:bold;-webkit-text-stroke:0.3px currentColor;transform:scaleX(0.9439);transform-origin:left 0;">Artikel mit 19% MwSt.</div>
<div class="t" style="right:457.40px;top:391.90px;font-size:7.8px;color:#1b1b1b;transform:scaleX(0.8180);transform-origin:right 0;">1</div>
<div class="t" style="left:207.80px;top:391.90px;font-size:7.8px;color:#1b1b1b;transform:scaleX(0.7211);transform-origin:left 0;">STCK</div>
<div class="t" style="right:457.40px;top:403.90px;font-size:7.8px;color:#1b1b1b;transform:scaleX(0.8180);transform-origin:right 0;">1</div>
<div class="t" style="left:286.60px;top:391.90px;font-size:7.8px;color:#1b1b1b;transform:scaleX(0.7211);transform-origin:left 0;">STCK</div>
<div class="t" style="left:286.60px;top:403.90px;font-size:7.8px;color:#1b1b1b;transform:scaleX(0.7211);transform-origin:left 0;">STCK</div>
<div class="t" style="left:361.50px;top:391.90px;font-size:7.8px;color:#1b1b1b;transform:scaleX(0.7211);transform-origin:left 0;">STCK</div>
<div class="t" style="left:361.50px;top:403.90px;font-size:7.8px;color:#1b1b1b;transform:scaleX(0.7211);transform-origin:left 0;">STCK</div>
<div class="t" style="left:361.50px;top:415.90px;font-size:7.8px;color:#1b1b1b;transform:scaleX(0.7211);transform-origin:left 0;">STCK</div>
<div class="a" style="left:429.10px;top:415.70px;width:150.10px;height:9.10px;background:#f4f3ef;"></div>
<div class="a" style="left:625.00px;top:267.50px;width:11.20px;height:251.10px;background:linear-gradient(90deg,#ffffff,#f3f6fb 60%,#dfe7f4);"></div>
<svg class="a" style="left:627px;top:269.5px" width="9" height="7.5" viewBox="0 0 9 7.5"><path d="M0.6 0.6 H6 Q8.4 0.6 8.4 3.4 V6.9 H0.6Z" fill="#f4f4f4" stroke="#858585" stroke-width="1.1"/><rect x="2.6" y="3" width="5.6" height="3.6" fill="#fff" stroke="#858585" stroke-width="0.8"/></svg>
<svg class="a" style="left:628.3px;top:280.3px" width="6" height="5" viewBox="0 0 6 5"><rect x="0.5" y="0" width="5" height="0.9" fill="#6178a6"/><path d="M0 4.6 L3 1.7 L6 4.6Z" fill="#6178a6"/></svg>
<svg class="a" style="left:628.3px;top:289.6px" width="6" height="6" viewBox="0 0 6 6"><path d="M3 0 L4.1 1.9 L6 3 L4.1 4.1 L3 6 L1.9 4.1 L0 3 L1.9 1.9Z" fill="#6178a6"/></svg>
<svg class="a" style="left:628.3px;top:299.3px" width="6" height="3" viewBox="0 0 6 3"><path d="M0 3 L3 0 L6 3Z" fill="#6178a6"/></svg>
<svg class="a" style="left:628px;top:370px" width="7" height="5" viewBox="0 0 7 5"><rect x="0.4" y="0.4" width="6" height="4.2" fill="none" stroke="#7a90b8" stroke-width="0.8"/><path d="M2.4 0.4 V4.6 M4.4 0.4 V4.6" stroke="#7a90b8" stroke-width="0.8"/></svg>
<div class="a" style="left:628.00px;top:379.50px;width:7.00px;height:0.60px;background:#c4d0e4;"></div>
<svg class="a" style="left:627px;top:382.5px" width="9" height="8" viewBox="0 0 9 8"><circle cx="3.5" cy="3.2" r="2.6" fill="none" stroke="#8aa0c4" stroke-width="0.9"/><path d="M5.5 5 L8.2 7.5" stroke="#7088b4" stroke-width="1.3"/></svg>
<div class="a" style="left:628.00px;top:393.50px;width:7.00px;height:0.60px;background:#c4d0e4;"></div>
<svg class="a" style="left:627.5px;top:397px" width="8" height="5" viewBox="0 0 8 5"><path d="M3 0.5 H0.5 L2 2.5 L0.5 4.5 H3" fill="none" stroke="#8aa0c4" stroke-width="0.8"/><path d="M4 4.5 V0.5 L5.5 3 L7 0.5 V4.5" fill="none" stroke="#8aa0c4" stroke-width="0.8"/></svg>
<div class="a" style="left:628.00px;top:405.50px;width:7.00px;height:0.60px;background:#c4d0e4;"></div>
<svg class="a" style="left:627px;top:409.8px" width="9" height="6" viewBox="0 0 9 6"><path d="M0.5 0.5 H6 L3.8 3 V5.5 L2.8 5 V3Z" fill="none" stroke="#8aa0c4" stroke-width="0.8"/><rect x="5.5" y="2.5" width="3" height="3" fill="none" stroke="#8aa0c4" stroke-width="0.7"/></svg>
<div class="a" style="left:628.00px;top:418.50px;width:7.00px;height:0.60px;background:#c4d0e4;"></div>
<svg class="a" style="left:627px;top:421.5px" width="9" height="7" viewBox="0 0 9 7"><rect x="0.5" y="0.5" width="5" height="4" fill="none" stroke="#8aa0c4" stroke-width="0.8"/><rect x="3" y="2.5" width="5.5" height="4" fill="#eef" stroke="#8aa0c4" stroke-width="0.8"/></svg>
<svg class="a" style="left:628.3px;top:494.2px" width="6" height="3" viewBox="0 0 6 3"><path d="M0 0 L3 3 L6 0Z" fill="#6178a6"/></svg>
<svg class="a" style="left:628.3px;top:502.3px" width="6" height="6" viewBox="0 0 6 6"><path d="M3 0 L4.1 1.9 L6 3 L4.1 4.1 L3 6 L1.9 4.1 L0 3 L1.9 1.9Z" fill="#6178a6"/></svg>
<svg class="a" style="left:628.3px;top:511.8px" width="6" height="5" viewBox="0 0 6 5"><rect x="0.5" y="4.1" width="5" height="0.9" fill="#6178a6"/><path d="M0 0.4 L3 3.3 L6 0.4Z" fill="#6178a6"/></svg>
</body></html>
